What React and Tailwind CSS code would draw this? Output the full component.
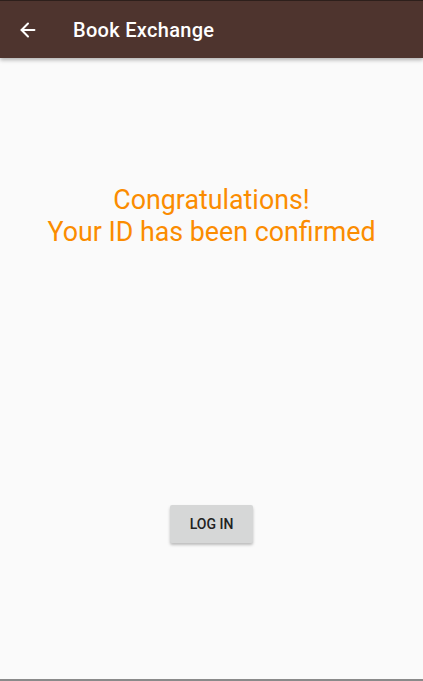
import { ArrowLeft } from "lucide-react";

export default function App() {
  return (
    <div
      className="w-[423px] h-[681px] flex flex-col bg-[#fafafa] border-t border-[#2d1f1b] border-b-2 border-b-[#8a8a8a] overflow-hidden"
      style={{ fontFamily: "Roboto, 'Noto Sans', sans-serif" }}
    >
      {/* Toolbar */}
      <header className="h-[57px] shrink-0 flex items-center bg-[#4e342e] shadow-[0_2px_4px_rgba(0,0,0,0.3)] z-10">
        <button type="button" className="ml-[16px] w-[24px] h-[24px] flex items-center justify-center text-white">
          <ArrowLeft size={22} strokeWidth={2.2} />
        </button>
        <h1 className="ml-[33px] text-[20px] font-medium text-white tracking-[0.3px]">Book Exchange</h1>
      </header>

      {/* Body */}
      <main className="flex-1 flex flex-col items-center">
        <div className="mt-[126px] text-center text-[26.8px] leading-[32px] text-[#fb8c00]">
          <p>Congratulations!</p>
          <p>Your ID has been confirmed</p>
        </div>
        <button
          type="button"
          className="mt-[257px] w-[83px] h-[38px] rounded-[2px] bg-[#d6d7d7] text-[14px] font-medium text-[#222] shadow-[0_2px_3px_rgba(0,0,0,0.25)]"
        >
          LOG IN
        </button>
      </main>
    </div>
  );
}
